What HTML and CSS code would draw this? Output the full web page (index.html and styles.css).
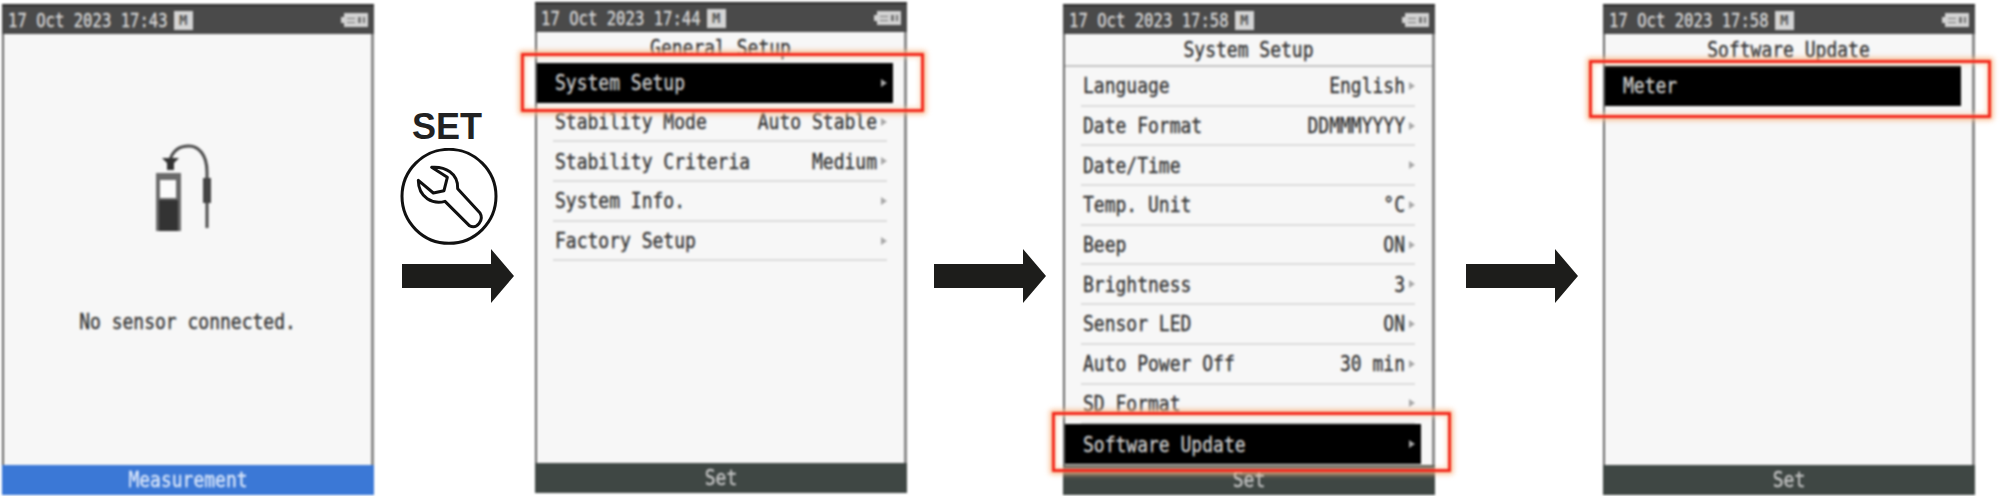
FILE: index.html
```html
<!DOCTYPE html>
<html lang="en">
<head>
    <meta charset="UTF-8">
    <title>Software Update</title>
    <link rel="stylesheet" href="styles.css">
</head>
<body>
    <div class="strip">
        <div class="screen screen-first">
            <div class="status">
                <span class="lcd">17 Oct 2023 17:43</span>
                <span class="mem">M</span>
                <svg class="battery" viewBox="0 0 27 16"><path d="M0 5h3V1h24v14H3v-4H0z" fill="#d2d2d2"/><path d="M6 6h8v1H6zM6 10h8v1H6zM17 5h3v6h-3zM22 5h2v6h-2z" fill="#777"/></svg>
            </div>
            <div class="empty">
                <svg class="sensor" width="60" height="90" viewBox="0 0 60 90">
                    <path d="M51 84V28C51 10 42 2 33 2 24 2 17 6 14 16" fill="none" stroke="#4a4a4a" stroke-width="3"/>
                    <path d="M6 14h17l-5 5v7h-7v-7z" fill="#333"/>
                    <rect x="47" y="34" width="8" height="25" fill="#444"/>
                    <rect x="0" y="29" width="25" height="58" fill="#6a6a6a"/>
                    <rect x="3" y="56" width="19" height="31" fill="#333"/>
                    <rect x="4" y="36" width="16" height="18" fill="#fbfbfb"/>
                </svg>
                <p class="empty-text"><span class="lcd">No sensor connected.</span></p>
            </div>
            <div class="softkey softkey-blue"><span class="lcd">Measurement</span></div>
        </div>

        <div class="step step-set">
            <div class="set-label">SET</div>
            <svg class="wrench" width="100" height="100" viewBox="30 150 300 300">
                <circle cx="177" cy="295" r="141" fill="none" stroke="#111" stroke-width="9"/>
                <path d="M125 208C165 205 205 225 203 272L270 345C282 365 262 395 238 383L165 310C130 320 85 300 85 247L130 285 162 278 172 238z" fill="none" stroke="#111" stroke-width="9" stroke-linejoin="round"/>
            </svg>
            <div class="arrow"></div>
        </div>

        <div class="screen screen-raised">
            <div class="status">
                <span class="lcd">17 Oct 2023 17:44</span>
                <span class="mem">M</span>
                <svg class="battery" viewBox="0 0 27 16"><path d="M0 5h3V1h24v14H3v-4H0z" fill="#d2d2d2"/><path d="M6 6h8v1H6zM6 10h8v1H6zM17 5h3v6h-3zM22 5h2v6h-2z" fill="#777"/></svg>
            </div>
            <div class="title"><span class="lcd">General Setup</span></div>
            <div class="menu">
                <div class="row row-on"><span class="lcd">System Setup</span><i class="more"></i></div>
                <div class="row"><span class="lcd">Stability Mode</span><span class="lcd value">Auto Stable</span><i class="more"></i></div>
                <div class="row"><span class="lcd">Stability Criteria</span><span class="lcd value">Medium</span><i class="more"></i></div>
                <div class="row"><span class="lcd">System Info.</span><i class="more"></i></div>
                <div class="row"><span class="lcd">Factory Setup</span><i class="more"></i></div>
            </div>
            <div class="softkey"><span class="lcd">Set</span></div>
            <div class="callout callout-general"></div>
        </div>

        <div class="step step-second"><div class="arrow"></div></div>

        <div class="screen">
            <div class="status">
                <span class="lcd">17 Oct 2023 17:58</span>
                <span class="mem">M</span>
                <svg class="battery" viewBox="0 0 27 16"><path d="M0 5h3V1h24v14H3v-4H0z" fill="#d2d2d2"/><path d="M6 6h8v1H6zM6 10h8v1H6zM17 5h3v6h-3zM22 5h2v6h-2z" fill="#777"/></svg>
            </div>
            <div class="title title-line"><span class="lcd">System Setup</span></div>
            <div class="menu">
                <div class="row"><span class="lcd">Language</span><span class="lcd value">English</span><i class="more"></i></div>
                <div class="row"><span class="lcd">Date Format</span><span class="lcd value">DDMMMYYYY</span><i class="more"></i></div>
                <div class="row"><span class="lcd">Date/Time</span><i class="more"></i></div>
                <div class="row"><span class="lcd">Temp. Unit</span><span class="lcd value">&deg;C</span><i class="more"></i></div>
                <div class="row"><span class="lcd">Beep</span><span class="lcd value">ON</span><i class="more"></i></div>
                <div class="row"><span class="lcd">Brightness</span><span class="lcd value">3</span><i class="more"></i></div>
                <div class="row"><span class="lcd">Sensor LED</span><span class="lcd value">ON</span><i class="more"></i></div>
                <div class="row"><span class="lcd">Auto Power Off</span><span class="lcd value">30 min</span><i class="more"></i></div>
                <div class="row"><span class="lcd">SD Format</span><i class="more"></i></div>
                <div class="row row-on"><span class="lcd">Software Update</span><i class="more"></i></div>
            </div>
            <div class="softkey"><span class="lcd">Set</span></div>
            <div class="callout callout-system"></div>
        </div>

        <div class="step step-third"><div class="arrow"></div></div>

        <div class="screen">
            <div class="status">
                <span class="lcd">17 Oct 2023 17:58</span>
                <span class="mem">M</span>
                <svg class="battery" viewBox="0 0 27 16"><path d="M0 5h3V1h24v14H3v-4H0z" fill="#d2d2d2"/><path d="M6 6h8v1H6zM6 10h8v1H6zM17 5h3v6h-3zM22 5h2v6h-2z" fill="#777"/></svg>
            </div>
            <div class="title title-tall"><span class="lcd">Software Update</span></div>
            <div class="menu">
                <div class="row row-on"><span class="lcd">Meter</span></div>
            </div>
            <div class="softkey"><span class="lcd">Set</span></div>
            <div class="callout callout-update"></div>
        </div>
    </div>
</body>
</html>
```

FILE: styles.css
```css
* {
    box-sizing: border-box;
}

body {
    margin: 0;
    background-color: #ffffff;
    font-family: "DejaVu Sans Mono", "Liberation Mono", monospace;
    font-size: 18px;
    color: #333333;
    overflow: hidden;
}

.strip {
    display: flex;
    align-items: flex-start;
    width: 2000px;
    height: 496px;
    padding: 4px 0 0 2px;
}

.lcd {
    display: inline-block;
    transform: scaleY(1.2);
    white-space: pre;
    -webkit-text-stroke: 0.3px;
}

/* device screens */
.screen {
    position: relative;
    display: flex;
    flex-direction: column;
    flex: none;
    width: 372px;
    height: 491px;
    background-color: #f7f7f7;
    border-left: 2px solid #666666;
    border-right: 3px solid #8a8a8a;
    filter: blur(0.8px);
}

.screen-raised {
    margin-top: -2px;
}

.status {
    display: flex;
    align-items: center;
    flex: none;
    height: 30px;
    margin: 0 -3px 0 -2px;
    padding: 0 6px 0 6px;
    background-color: #4a4a4a;
    border-top: 2px solid #2a2a2a;
    color: #d6d6d6;
    font-size: 15.6px;
}

.status .lcd {
    transform: scaleY(1.3);
}

.mem {
    width: 19px;
    height: 19px;
    margin-left: 6px;
    background-color: #d4d4d4;
    color: #555555;
    font-size: 14px;
    font-weight: bold;
    line-height: 19px;
    text-align: center;
}

.battery {
    width: 27px;
    height: 16px;
    margin-left: auto;
}

.title {
    flex: none;
    height: 31px;
    font-size: 18px;
    line-height: 31px;
    text-align: center;
}

.title-line {
    height: 33px;
    border-bottom: 2px solid #c4c4c4;
}

.title-tall {
    height: 32px;
}

.menu {
    flex: 1;
}

.row {
    display: flex;
    align-items: center;
    height: 39.7px;
    margin: 0 17px 0 16px;
    padding: 0 0 0 2px;
    border-bottom: 2px solid #dcdcdc;
}

.row-on {
    margin: 0 11px 0 0;
    padding: 0 6px 0 18px;
    background-color: #000000;
    border-bottom: none;
    color: #cccccc;
}

.value {
    margin-left: auto;
}

.more {
    width: 0;
    height: 0;
    margin-left: auto;
    border-left: 6px solid #a8a8a8;
    border-top: 4px solid transparent;
    border-bottom: 4px solid transparent;
}

.value + .more {
    margin-left: 4px;
}

.softkey {
    flex: none;
    height: 30px;
    margin: 0 -3px 0 -2px;
    background-color: #3f4744;
    color: #c6c6c6;
    line-height: 30px;
    text-align: center;
}

.softkey-blue {
    background-color: #3b78d6;
    color: #dbe7fa;
}

/* red highlight over a row */
.callout {
    position: absolute;
    border: 3px solid #f3281c;
    box-shadow: 0 0 5px 2px #f9b98a, inset 0 0 5px 1px #fbd2b0;
}

.callout-general {
    top: 51px;
    left: -16px;
    width: 403px;
    height: 59px;
}

.callout-system {
    top: 408px;
    left: -13px;
    width: 399px;
    height: 60px;
}

.callout-update {
    top: 56px;
    left: -16px;
    width: 402px;
    height: 58px;
}

/* first screen */
.empty {
    display: flex;
    flex: 1;
    flex-direction: column;
    align-items: center;
    padding-top: 110px;
}

.sensor {
    margin-right: 4px;
}

.empty-text {
    margin: 77px 0 0;
}

/* steps between screens */
.step {
    display: flex;
    flex: none;
    flex-direction: column;
    align-items: flex-start;
}

.step-set {
    width: 161px;
    padding: 102px 0 0 28px;
}

.step-second {
    width: 156px;
    padding: 245px 0 0 27px;
}

.step-third {
    width: 168px;
    padding: 245px 0 0 31px;
}

.set-label {
    width: 90px;
    color: #222222;
    font-family: "Liberation Sans", Arial, sans-serif;
    font-size: 36px;
    font-weight: bold;
    line-height: 42px;
    text-align: center;
}

.wrench {
    margin-left: -2px;
}

.arrow {
    width: 112px;
    height: 54px;
    background-color: #1d1d1b;
    clip-path: polygon(0 15px, 89px 15px, 89px 0, 112px 27px, 89px 54px, 89px 39px, 0 39px);
}

.step-set .arrow {
    margin-top: 1px;
}
```
